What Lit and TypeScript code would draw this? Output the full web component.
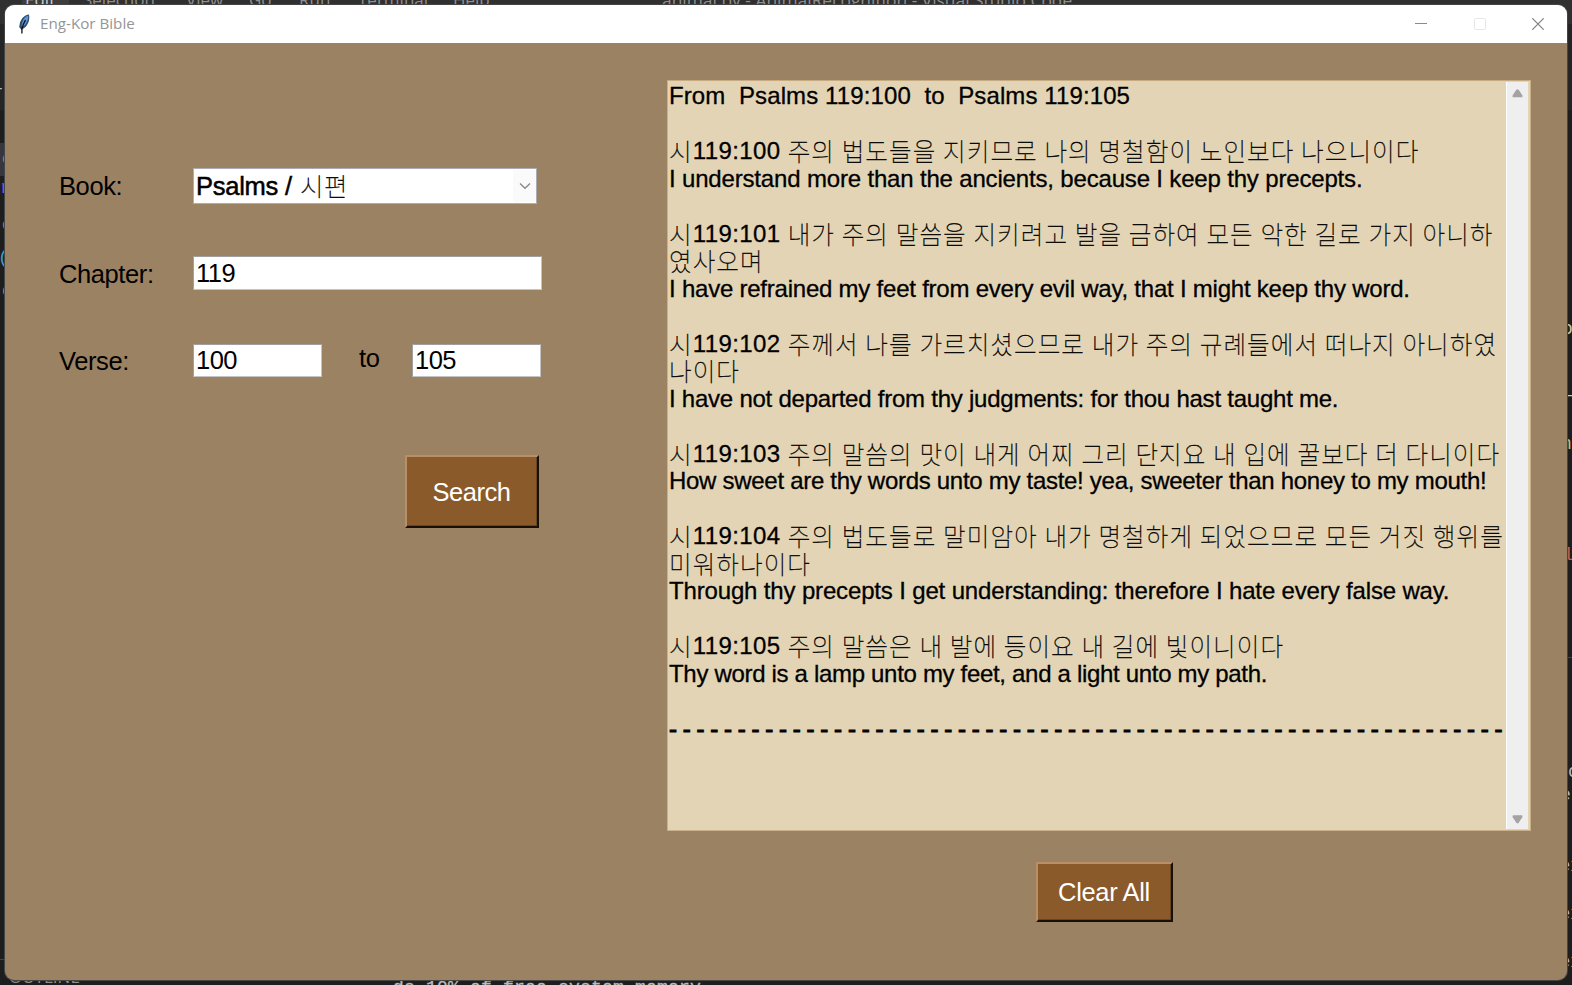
import { LitElement, html, css } from "lit";
import { customElement, property } from "lit/decorators.js";

type Line = { text: string; track?: number };

const LINES: Line[] = [
  { text: "From  Psalms 119:100  to  Psalms 119:105", track: 0.11 },
  { text: "" },
  { text: "시119:100 주의 법도들을 지키므로 나의 명철함이 노인보다 나으니이다" },
  { text: "I understand more than the ancients, because I keep thy precepts.", track: -0.17 },
  { text: "" },
  { text: "시119:101 내가 주의 말씀을 지키려고 발을 금하여 모든 악한 길로 가지 아니하" },
  { text: "였사오며" },
  { text: "I have refrained my feet from every evil way, that I might keep thy word.", track: -0.226 },
  { text: "" },
  { text: "시119:102 주께서 나를 가르치셨으므로 내가 주의 규례들에서 떠나지 아니하였" },
  { text: "나이다" },
  { text: "I have not departed from thy judgments: for thou hast taught me.", track: -0.236 },
  { text: "" },
  { text: "시119:103 주의 말씀의 맛이 내게 어찌 그리 단지요 내 입에 꿀보다 더 다니이다" },
  { text: "How sweet are thy words unto my taste! yea, sweeter than honey to my mouth!", track: -0.29 },
  { text: "" },
  { text: "시119:104 주의 법도들로 말미암아 내가 명철하게 되었으므로 모든 거짓 행위를" },
  { text: "미워하나이다" },
  { text: "Through thy precepts I get understanding: therefore I hate every false way.", track: -0.155 },
  { text: "" },
  { text: "시119:105 주의 말씀은 내 발에 등이요 내 길에 빛이니이다" },
  { text: "Thy word is a lamp unto my feet, and a light unto my path.", track: -0.315 },
  { text: "" },
  { text: Array(61).fill("-").join(" "), track: -0.45 },
];

const splitScripts = (text: string) =>
  text
    .split(/([\uac00-\ud7a3]+)/)
    .filter((part) => part)
    .map((part) => {
      if (/[\uac00-\ud7a3]/.test(part)) return html`<span class="ko">${part}</span>`;
      if (/^\d/.test(part)) return html`<span class="ref">${part}</span>`;
      return part;
    });

@customElement("result-text")
class ResultText extends LitElement {
  @property({ attribute: false }) lines: Line[] = [];

  static styles = css`
    :host {
      display: flex;
      box-sizing: border-box;
      width: 864px;
      height: 751px;
      background: #e3d4b5;
      border: 1px solid #c9b08a;
      border-top-color: #c6ab82;
      font: 24px/27.5px "Liberation Sans", Arial, sans-serif;
      color: #000;
    }
    .text {
      flex: 1;
      padding: 1px 0 0 1px;
      overflow: hidden;
    }
    .line {
      height: 27.5px;
      white-space: pre;
      -webkit-text-stroke: 0.3px #000;
    }
    .rule {
      -webkit-text-stroke: 1px #000;
    }
    .ref {
      letter-spacing: 0.42px;
    }
    .ko {
      font-family: "Noto Sans CJK KR", sans-serif;
      font-weight: 100;
      font-size: 24.6px;
      letter-spacing: 1.04px;
      line-height: 0;
      vertical-align: -1.5px;
      -webkit-text-stroke: 0.3px #000;
    }
    .scroll {
      width: 22px;
      margin: 1px 2px 1px 0;
      background: #efefef;
      border-left: 1px solid #fff;
      display: flex;
      flex-direction: column;
      justify-content: space-between;
      align-items: center;
      padding: 7px 0 5px;
      box-sizing: border-box;
    }
    svg {
      display: block;
    }
  `;

  render() {
    return html`
      <div class="text">
        ${this.lines.map(
          (l) =>
            html`<div class="line ${l.text.startsWith("- ") ? "rule" : ""}" style="letter-spacing:${l.track ?? 0}px">${splitScripts(l.text)}</div>`
        )}
      </div>
      <div class="scroll">
        <svg width="11" height="9"><path d="M4.3 .8Q5.5 -.4 6.7 .8L10.3 6.3Q10.8 8.3 9.8 8.3H1.2Q.2 8.3 .7 6.3Z" fill="#a3a3a3" /></svg>
        <svg width="11" height="9"><path d="M4.3 7.8Q5.5 9 6.7 7.8L10.3 2.3Q10.8 .3 9.8 .3H1.2Q.2 .3 .7 2.3Z" fill="#a3a3a3" /></svg>
      </div>
    `;
  }
}

@customElement("app-root")
class AppRoot extends LitElement {
  static styles = css`
    :host {
      display: block;
      position: relative;
      box-sizing: border-box;
      width: 1572px;
      height: 985px;
      padding: 5px;
      overflow: hidden;
      background: linear-gradient(#303030 0 24px, #252526 24px 110px, #1e1e1e 110px);
      font-family: "Liberation Sans", Arial, sans-serif;
    }
    .bit {
      position: absolute;
      white-space: pre;
      line-height: 20px;
    }
    .menu {
      font: 17px/20px "Open Sans", sans-serif;
      color: #8f8f8f;
      top: -10px;
    }
    .lit {
      color: #ccc;
    }
    .caption {
      font-size: 17.4px;
    }
    .tab {
      left: 22px;
      top: 0;
      width: 47px;
      height: 6px;
      background: #3d3d3d;
    }
    .row-hl {
      left: 0;
      top: 143px;
      width: 6px;
      height: 33px;
      background: #37373d;
    }
    .sep {
      height: 1px;
      width: 6px;
      background: #444;
    }
    .code {
      font: 18px/20px "Liberation Mono", monospace;
    }
    .log {
      font: 18px/20px "Liberation Mono", monospace;
      letter-spacing: 0.2px;
      -webkit-text-stroke: 0.3px #bbb;
    }
    .window {
      position: relative;
      display: flex;
      flex-direction: column;
      width: 1562px;
      height: 975px;
      border-radius: 9px;
      overflow: hidden;
      background: #9b8262;
      box-shadow: 0 0 0 1px #454545;
    }
    .titlebar {
      display: flex;
      align-items: center;
      box-sizing: border-box;
      height: 39px;
      padding: 0 23px 0 13px;
      background: #fff;
      border-bottom: 1px solid #8e8a68;
    }
    .title {
      flex: 1;
      margin-left: 9px;
      padding-bottom: 2px;
      font: 15.2px/34px "Open Sans", "Noto Sans", sans-serif;
      color: #959595;
    }
    .controls {
      display: flex;
      gap: 46.500px;
    }
    svg {
      display: block;
    }
    .body {
      display: flex;
      flex: 1;
    }
    .form {
      width: 608px;
      padding: 124px 0 0 54px;
      font-size: 25.5px;
      letter-spacing: -0.4px;
      color: #000;
    }
    .row {
      display: flex;
      align-items: flex-start;
    }
    .book {
      height: 88px;
      line-height: 37px;
    }
    .chapter {
      height: 88px;
      line-height: 34px;
    }
    .verse {
      height: 111px;
      line-height: 33px;
    }
    .label {
      width: 134px;
    }
    .low {
      padding-top: 1px;
    }
    .field {
      box-sizing: border-box;
      background: #fff;
      border: 1px solid #c4c4c4;
      border-top-color: #a0a0a0;
      border-left-color: #a0a0a0;
      padding-left: 2px;
      letter-spacing: -0.5px;
    }
    .field span {
      display: block;
      margin-top: -1px;
      white-space: pre;
    }
    .combo {
      display: flex;
      justify-content: space-between;
      width: 344px;
      height: 36px;
      border-color: #abadb3;
    }
    .combo .value {
      -webkit-text-stroke: 0.5px #000;
      letter-spacing: -0.25px;
    }
    .combo .ko {
      display: inline;
      font-family: "Noto Sans CJK KR", sans-serif;
      font-weight: 100;
      font-size: 25.5px;
      letter-spacing: 0.4px;
      line-height: 0;
      margin-left: 1.5px;
      vertical-align: -1px;
      -webkit-text-stroke: 0.3px #000;
    }
    .arrow {
      display: grid;
      place-items: center;
      width: 23px;
      margin: 1px 0;
      background: #fafafa;
    }
    .wide {
      width: 349px;
      height: 34px;
    }
    .small {
      width: 129px;
      height: 33px;
    }
    .to {
      width: 90px;
      margin-top: -2px;
      box-sizing: border-box;
      padding-left: 37px;
    }
    .btn {
      box-sizing: border-box;
      display: grid;
      place-items: center;
      background: #8b5a2b;
      border: 2px solid;
      border-color: #b98f68 #1a0f06 #1a0f06 #b98f68;
      color: #fff;
      font-size: 25.5px;
      letter-spacing: -0.5px;
      box-shadow: inset -1px -1px 0 #6b4420;
    }
    .search {
      width: 134px;
      height: 73px;
      margin-left: 346px;
      padding: 1px 1px 0 0;
    }
    .output {
      display: flex;
      flex-direction: column;
      align-items: flex-start;
      padding-top: 36px;
    }
    .clear {
      width: 137px;
      height: 60px;
      margin: 31px 0 0 369px;
      letter-spacing: -0.35px;
      padding-right: 1px;
    }
  `;

  private bit(left: number, top: number, text: string, color: string, cls = "code") {
    return html`<span class="bit ${cls}" style="left:${left}px;top:${top}px;color:${color}">${text}</span>`;
  }

  render() {
    const menus: [number, string][] = [
      [83, "Selection"],
      [186, "View"],
      [249, "Go"],
      [299, "Run"],
      [358, "Terminal"],
      [453, "Help"],
    ];
    return html`
      <div class="bit tab"></div>
      <span class="bit menu lit" style="left:25px">Edit</span>
      ${menus.map(([x, t]) => html`<span class="bit menu" style="left:${x}px">${t}</span>`)}
      <span class="bit menu caption" style="left:662px">animal.py - AnimalRecognition - Visual Studio Code</span>
      <div class="bit row-hl"></div>
      ${this.bit(-8, 80, "+", "#bbb")}
      ${this.bit(2, 149, "c", "#569cd6")}
      ${this.bit(0, 178, "r", "#8a50e0")}
      ${this.bit(2, 215, "c", "#4f9fd6")}
      ${this.bit(-2, 248, "(", "#3f9fd6")}
      ${this.bit(2, 281, "c", "#4f9fd6")}
      ${this.bit(1562, 319, "o", "#d0c896")}
      ${this.bit(1566, 385, "—", "#d0c896")}
      ${this.bit(1561, 434, "n", "#c9bd6e")}
      ${this.bit(1563, 545, "l", "#d0604a")}
      <div class="bit sep" style="left:1566px;top:657px"></div>
      <div class="bit sep" style="left:0;top:959px"></div>
      ${this.bit(1568, 762, "c", "#bbb")}
      ${this.bit(1560, 785, "e", "#bbb")}
      ${[856, 904, 952].map((y) => this.bit(1559.5, y, "ex", "#bbb"))}
      <span class="bit menu" style="left:9px;top:967px">OUTLINE</span>
      ${this.bit(393, 978, "ds 10% of free system memory.", "#bbb", "log")}

      <div class="window">
        <div class="titlebar">
          <svg width="13" height="20" viewBox="0 0 13 20">
            <path d="M11 .5C7 1 3.500 4 2 8.500L1.200 13 3.500 16 7.500 13C10.500 9.500 12 5 11 .5Z" fill="#2f4a6e" />
            <path d="M10.300 1.500C7.500 2.500 5 5 4.200 8.500L3.500 12 5.500 12.500C8.500 9.500 10.500 6 10.300 1.500Z" fill="#5b96d8" />
            <path d="M7.500 6L5.300 10.500 3.900 15V19.500" fill="none" stroke="#111" stroke-width="1.300" />
          </svg>
          <div class="title">Eng-Kor Bible</div>
          <div class="controls">
            <svg width="12" height="12"><path d="M0 5.500H12" stroke="#8a8a8a" /></svg>
            <svg width="12" height="12"><rect x=".5" y=".5" width="11" height="11" rx="1" fill="none" stroke="#e6e6e6" /></svg>
            <svg width="12" height="12"><path d="M.3 .3L11.700 11.700M11.700 .3L.3 11.700" stroke="#808080" stroke-width="1.200" /></svg>
          </div>
        </div>
        <div class="body">
          <div class="form">
            <div class="row book">
              <div class="label">Book:</div>
              <div class="field combo">
                <span class="value">Psalms / <span class="ko">시편</span></span>
                <div class="arrow">
                  <svg width="12" height="8"><path d="M1 1.500L6 6.300 11 1.500" fill="none" stroke="#888" stroke-width="1.300" /></svg>
                </div>
              </div>
            </div>
            <div class="row chapter">
              <div class="label low">Chapter:</div>
              <div class="field wide"><span>119</span></div>
            </div>
            <div class="row verse">
              <div class="label low">Verse:</div>
              <div class="field small"><span>100</span></div>
              <div class="to">to</div>
              <div class="field small"><span>105</span></div>
            </div>
            <div class="btn search">Search</div>
          </div>
          <div class="output">
            <result-text .lines=${LINES}></result-text>
            <div class="btn clear">Clear All</div>
          </div>
        </div>
      </div>
    `;
  }
}
